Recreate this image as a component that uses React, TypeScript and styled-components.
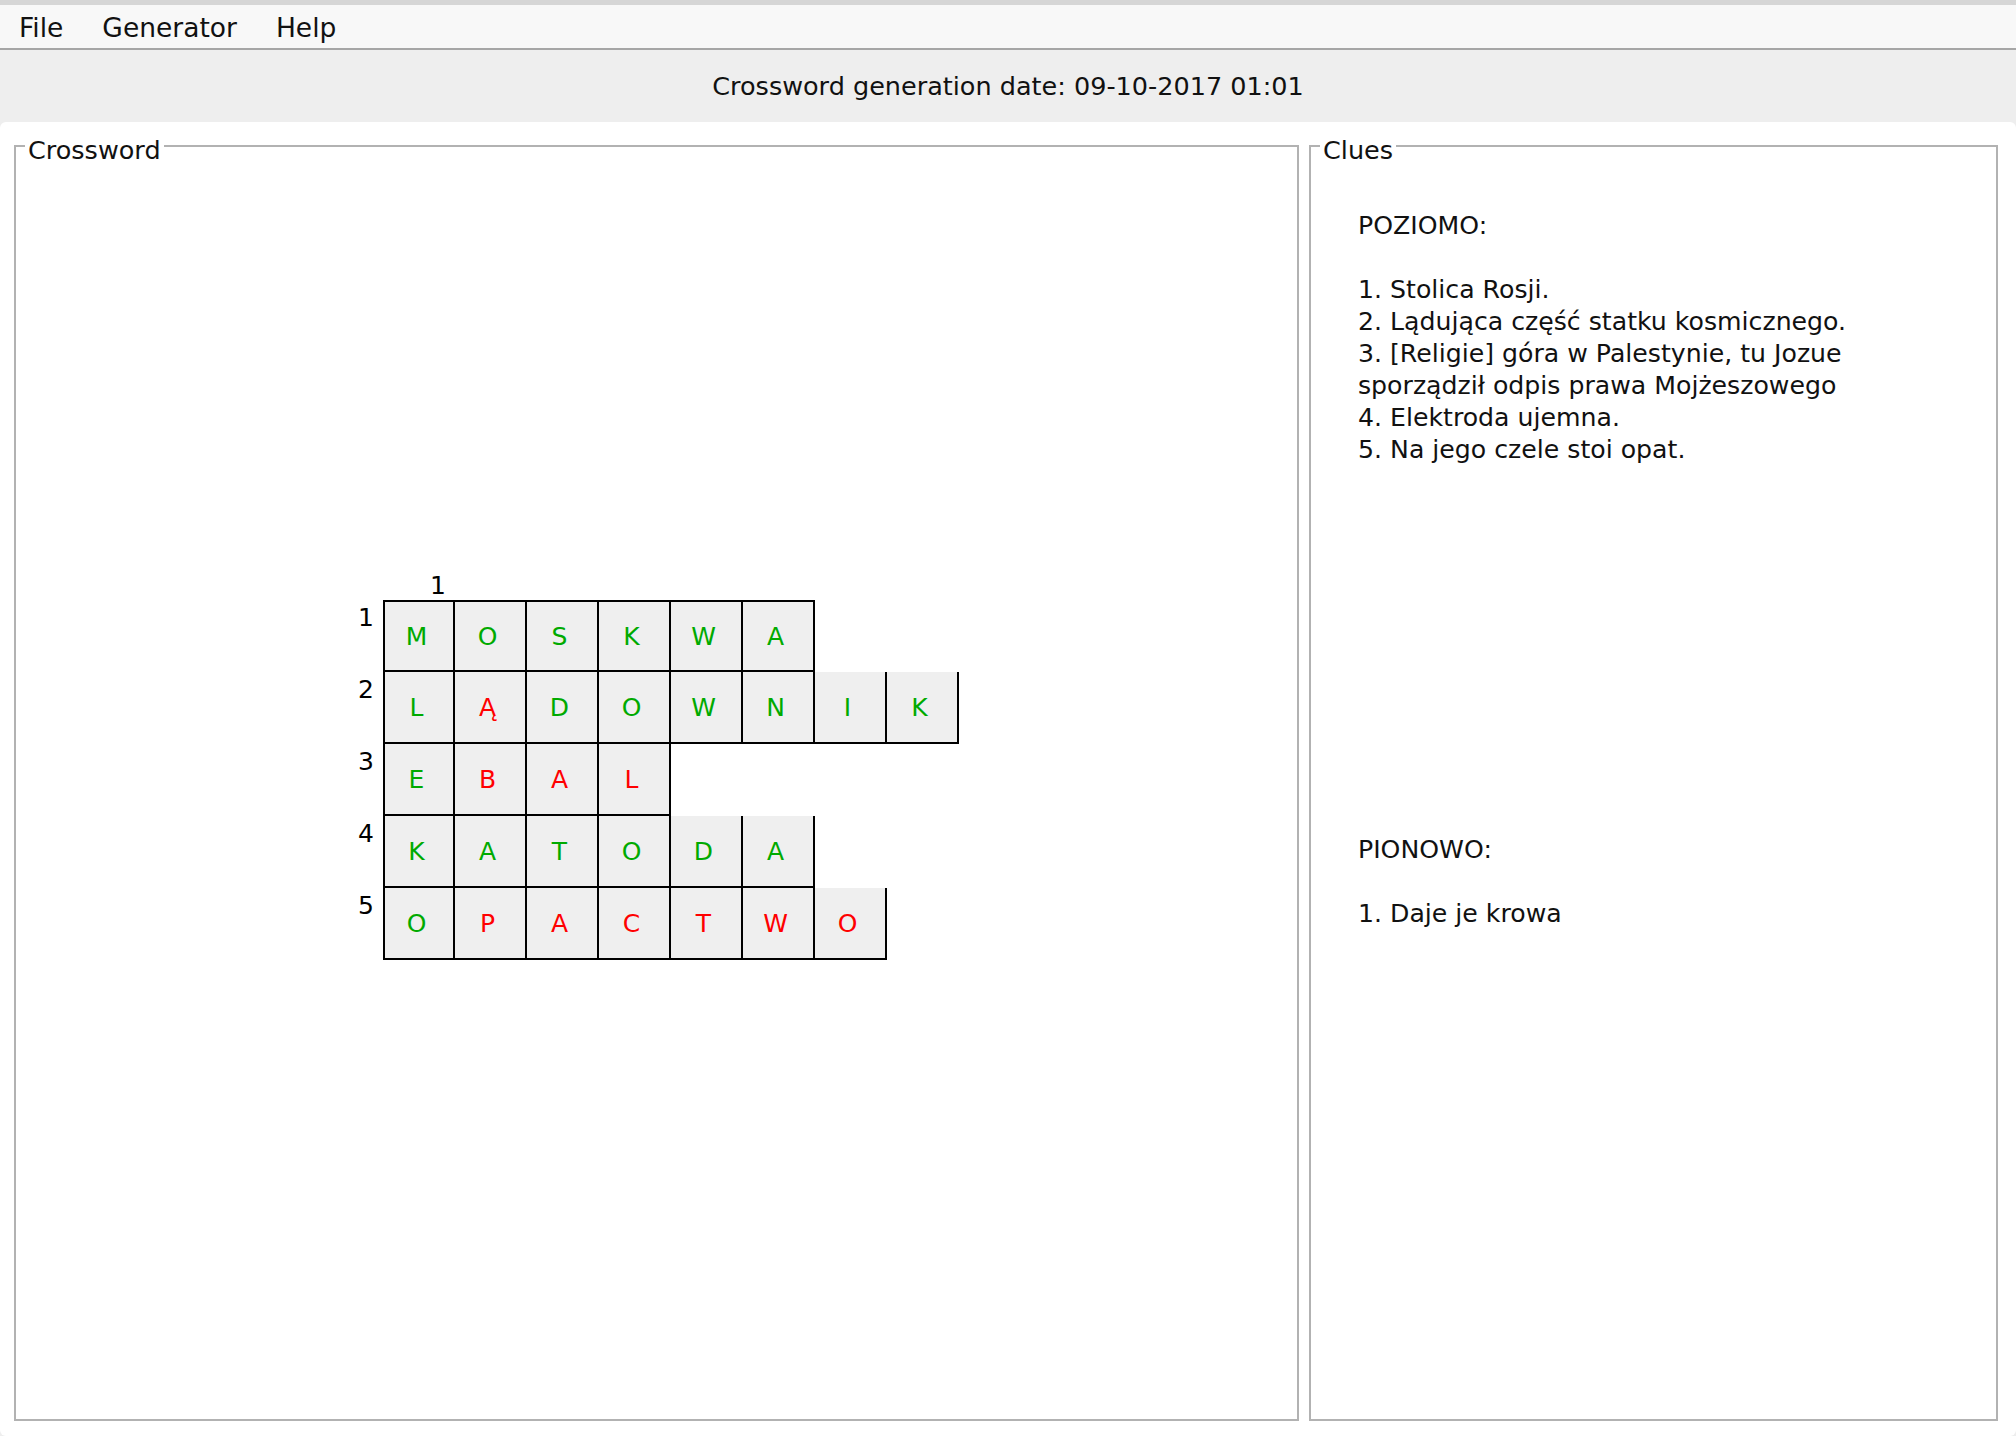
import React from "react";
import styled, { createGlobalStyle } from "styled-components";

const GlobalStyle = createGlobalStyle`
  html, body {
    margin: 0;
    padding: 0;
    background: #eeeeee;
  }
  body {
    font-family: "DejaVu Sans", "Liberation Sans", sans-serif;
    color: #000;
  }
  * { box-sizing: border-box; }
`;

const Window = styled.div`
  display: flex;
  flex-direction: column;
  height: 100vh;
  background: #eeeeee;
  border-top: 5px solid #d6d6d6;
`;

const MenuBar = styled.nav`
  display: flex;
  align-items: center;
  gap: 39px;
  height: 45px;
  padding: 2px 0 0 19px;
  background: #f8f8f8;
  border-bottom: 2px solid #a6a6a6;
`;

const MenuItem = styled.span`
  font-size: 26.5px;
  line-height: 30px;
  color: #111;
`;

const Header = styled.header`
  display: flex;
  align-items: center;
  justify-content: center;
  height: 72px;
  font-size: 25.5px;
  color: #111;
`;

const Panel = styled.main`
  flex: 1;
  display: grid;
  grid-template-columns: 1285px 689px;
  column-gap: 10px;
  padding: 5px 18px 15px 14px;
  background: #ffffff;
  border-radius: 6px;
  min-height: 0;
`;

const Group = styled.fieldset`
  margin: 0;
  min-width: 0;
  padding: 0 0 0 9px;
  border: 2px solid #b2b2b2;
  display: flex;
  flex-direction: column;
`;

const Title = styled.legend`
  padding: 8px 3px 0;
  font-size: 25.5px;
  line-height: 30px;
  color: #111;
`;

const Board = styled.div`
  display: grid;
  grid-template-columns: 25px repeat(8, 72px);
  grid-template-rows: 29px repeat(5, 72px);
  margin: 406px 0 0 333px;
  width: max-content;
`;

const Label = styled.div<{ $col: number; $row: number; $padLeft?: number }>`
  grid-column: ${(p) => p.$col};
  grid-row: ${(p) => p.$row};
  font-size: 25px;
  line-height: 29px;
  padding-top: ${(p) => (p.$row === 1 ? 0 : 3)}px;
  padding-left: ${(p) => p.$padLeft ?? 0}px;
  white-space: nowrap;
`;

const Cell = styled.div<{ $col: number; $row: number; $top: boolean; $left: boolean; $wrong: boolean }>`
  grid-column: ${(p) => p.$col};
  grid-row: ${(p) => p.$row};
  display: flex;
  align-items: center;
  justify-content: center;
  padding-right: 5px;
  background: #efefef;
  border-right: 2px solid #000;
  border-bottom: 2px solid #000;
  border-top: ${(p) => (p.$top ? "2px solid #000" : "none")};
  border-left: ${(p) => (p.$left ? "2px solid #000" : "none")};
  font-size: 25px;
  color: ${(p) => (p.$wrong ? "#ff0000" : "#00aa00")};
`;

const Clues = styled.div<{ $top: number }>`
  margin: ${(p) => p.$top}px 0 0 38px;
  font-size: 25.2px;
  line-height: 32px;
  color: #111;
  white-space: nowrap;
`;

const ClueLine = styled.div`
  min-height: 32px;
`;

type Letter = { ch: string; wrong?: boolean };

const rows: Letter[][] = [
  [{ ch: "M" }, { ch: "O" }, { ch: "S" }, { ch: "K" }, { ch: "W" }, { ch: "A" }],
  [
    { ch: "L" },
    { ch: "Ą", wrong: true },
    { ch: "D" },
    { ch: "O" },
    { ch: "W" },
    { ch: "N" },
    { ch: "I" },
    { ch: "K" },
  ],
  [{ ch: "E" }, { ch: "B", wrong: true }, { ch: "A", wrong: true }, { ch: "L", wrong: true }],
  [{ ch: "K" }, { ch: "A" }, { ch: "T" }, { ch: "O" }, { ch: "D" }, { ch: "A" }],
  [
    { ch: "O" },
    { ch: "P", wrong: true },
    { ch: "A", wrong: true },
    { ch: "C", wrong: true },
    { ch: "T", wrong: true },
    { ch: "W", wrong: true },
    { ch: "O", wrong: true },
  ],
];

const across = [
  "POZIOMO:",
  "",
  "1. Stolica Rosji.",
  "2. Lądująca część statku kosmicznego.",
  "3. [Religie] góra w Palestynie, tu Jozue",
  "sporządził odpis prawa Mojżeszowego",
  "4. Elektroda ujemna.",
  "5. Na jego czele stoi opat.",
];

const down = ["PIONOWO:", "", "1. Daje je krowa"];

export default function App() {
  return (
    <>
      <GlobalStyle />
      <Window>
        <MenuBar>
          <MenuItem>File</MenuItem>
          <MenuItem>Generator</MenuItem>
          <MenuItem>Help</MenuItem>
        </MenuBar>
        <Header>Crossword generation date: 09-10-2017 01:01</Header>
        <Panel>
          <Group>
            <Title>Crossword</Title>
            <Board>
              <Label $col={2} $row={1} $padLeft={47}>
                1
              </Label>
              {rows.map((row, r) => (
                <React.Fragment key={r}>
                  <Label $col={1} $row={r + 2}>
                    {r + 1}
                  </Label>
                  {row.map((l, c) => (
                    <Cell
                      key={c}
                      $col={c + 2}
                      $row={r + 2}
                      $top={r === 0}
                      $left={c === 0}
                      $wrong={!!l.wrong}
                    >
                      {l.ch}
                    </Cell>
                  ))}
                </React.Fragment>
              ))}
            </Board>
          </Group>
          <Group>
            <Title>Clues</Title>
            <Clues $top={45}>
              {across.map((t, i) => (
                <ClueLine key={i}>{t}</ClueLine>
              ))}
            </Clues>
            <Clues $top={368}>
              {down.map((t, i) => (
                <ClueLine key={i}>{t}</ClueLine>
              ))}
            </Clues>
          </Group>
        </Panel>
      </Window>
    </>
  );
}
